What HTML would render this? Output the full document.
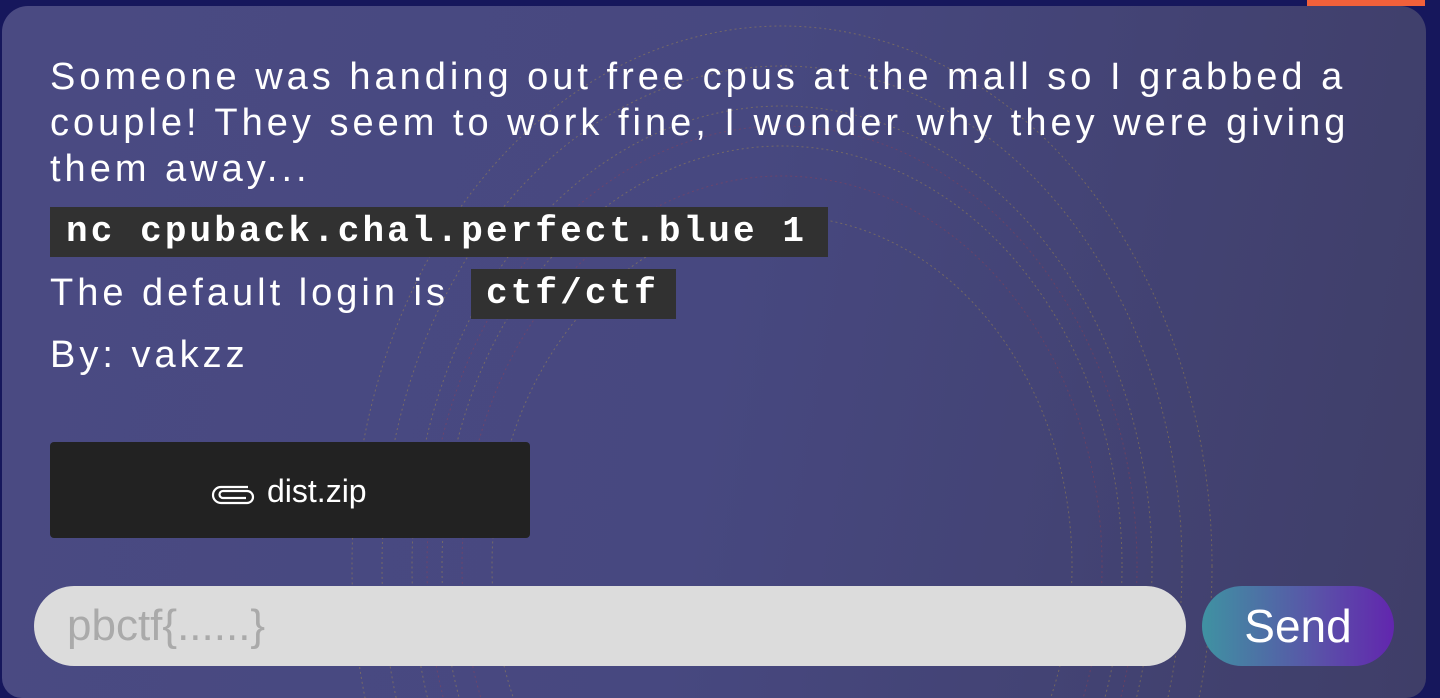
<!DOCTYPE html>
<html><head><meta charset="utf-8"><style>
html,body{margin:0;padding:0;width:1440px;height:698px;overflow:hidden;background:#16175c;position:relative;}
.card{position:absolute;left:2px;top:6px;width:1424px;height:692px;border-radius:26px 26px 20px 20px;background:linear-gradient(100deg,#4a4a82 0%,#474880 50%,#3f3e68 100%);overflow:hidden;}
.orange{position:absolute;left:1307px;top:0;width:118px;height:6px;background:#f2603a;}
.t{position:absolute;left:50px;color:#fff;font-family:"Liberation Sans",sans-serif;font-size:38px;line-height:44px;letter-spacing:4px;white-space:nowrap;}
.code{position:absolute;background:#313131;color:#fff;font-family:"Liberation Mono",monospace;font-weight:bold;font-size:36px;letter-spacing:3.1px;white-space:nowrap;height:50px;line-height:50px;box-sizing:border-box;}
.btn{position:absolute;left:50px;top:442px;width:480px;height:96px;background:#222;border-radius:4px;color:#fff;font-family:"Liberation Sans",sans-serif;font-size:32px;}
.inp{position:absolute;left:34px;top:586px;width:1152px;height:80px;border-radius:40px;background:#dcdcdc;color:#aaa;font-family:"Liberation Sans",sans-serif;font-size:44px;line-height:80px;padding-left:33px;box-sizing:border-box;}
.send{position:absolute;left:1202px;top:586px;width:192px;height:80px;border-radius:40px;background:linear-gradient(90deg,#3f92a2,#5a52a8 60%,#6226ae);color:#fff;font-family:"Liberation Sans",sans-serif;font-size:46px;line-height:80px;text-align:center;}
</style></head><body>
<div class="orange"></div>
<div class="card">
<svg width="1424" height="692" style="position:absolute;left:0;top:0" fill="none" stroke-dasharray="2 3">
<g stroke="#c9a63a" stroke-opacity="0.35">
<ellipse cx="780" cy="560" rx="340" ry="420"/><ellipse cx="780" cy="560" rx="370" ry="460"/><ellipse cx="780" cy="560" rx="400" ry="500"/>
<ellipse cx="780" cy="560" rx="430" ry="540"/><ellipse cx="780" cy="560" rx="290" ry="350"/>
</g>
<g stroke="#c04040" stroke-opacity="0.3">
<ellipse cx="780" cy="560" rx="320" ry="390"/><ellipse cx="780" cy="560" rx="355" ry="440"/>
</g>
</svg>
</div>
<div class="t" style="top:55px">Someone was handing out free cpus at the mall so I grabbed a</div>
<div class="t" style="top:101px">couple! They seem to work fine, I wonder why they were giving</div>
<div class="t" style="top:147px">them away...</div>
<div class="code" style="left:50px;top:207px;width:778px;padding-left:16px">nc cpuback.chal.perfect.blue 1</div>
<div class="t" style="top:271px">The default login is</div>
<div class="code" style="left:471px;top:269px;width:205px;padding-left:15px">ctf/ctf</div>
<div class="t" style="top:333px">By: vakzz</div>
<div class="btn">
<svg style="position:absolute;left:160px;top:41px" width="48" height="24" viewBox="0 0 48 24" fill="none" stroke="#fff" stroke-width="2.2">
<path d="M38 4H11a8 8 0 0 0 0 16h26a6 6 0 0 0 0-12H13a3.5 3.5 0 0 0 0 7h23"/>
</svg>
<span style="position:absolute;left:217px;top:31px">dist.zip</span>
</div>
<div class="inp">pbctf{......}</div>
<div class="send">Send</div>
</body></html>
